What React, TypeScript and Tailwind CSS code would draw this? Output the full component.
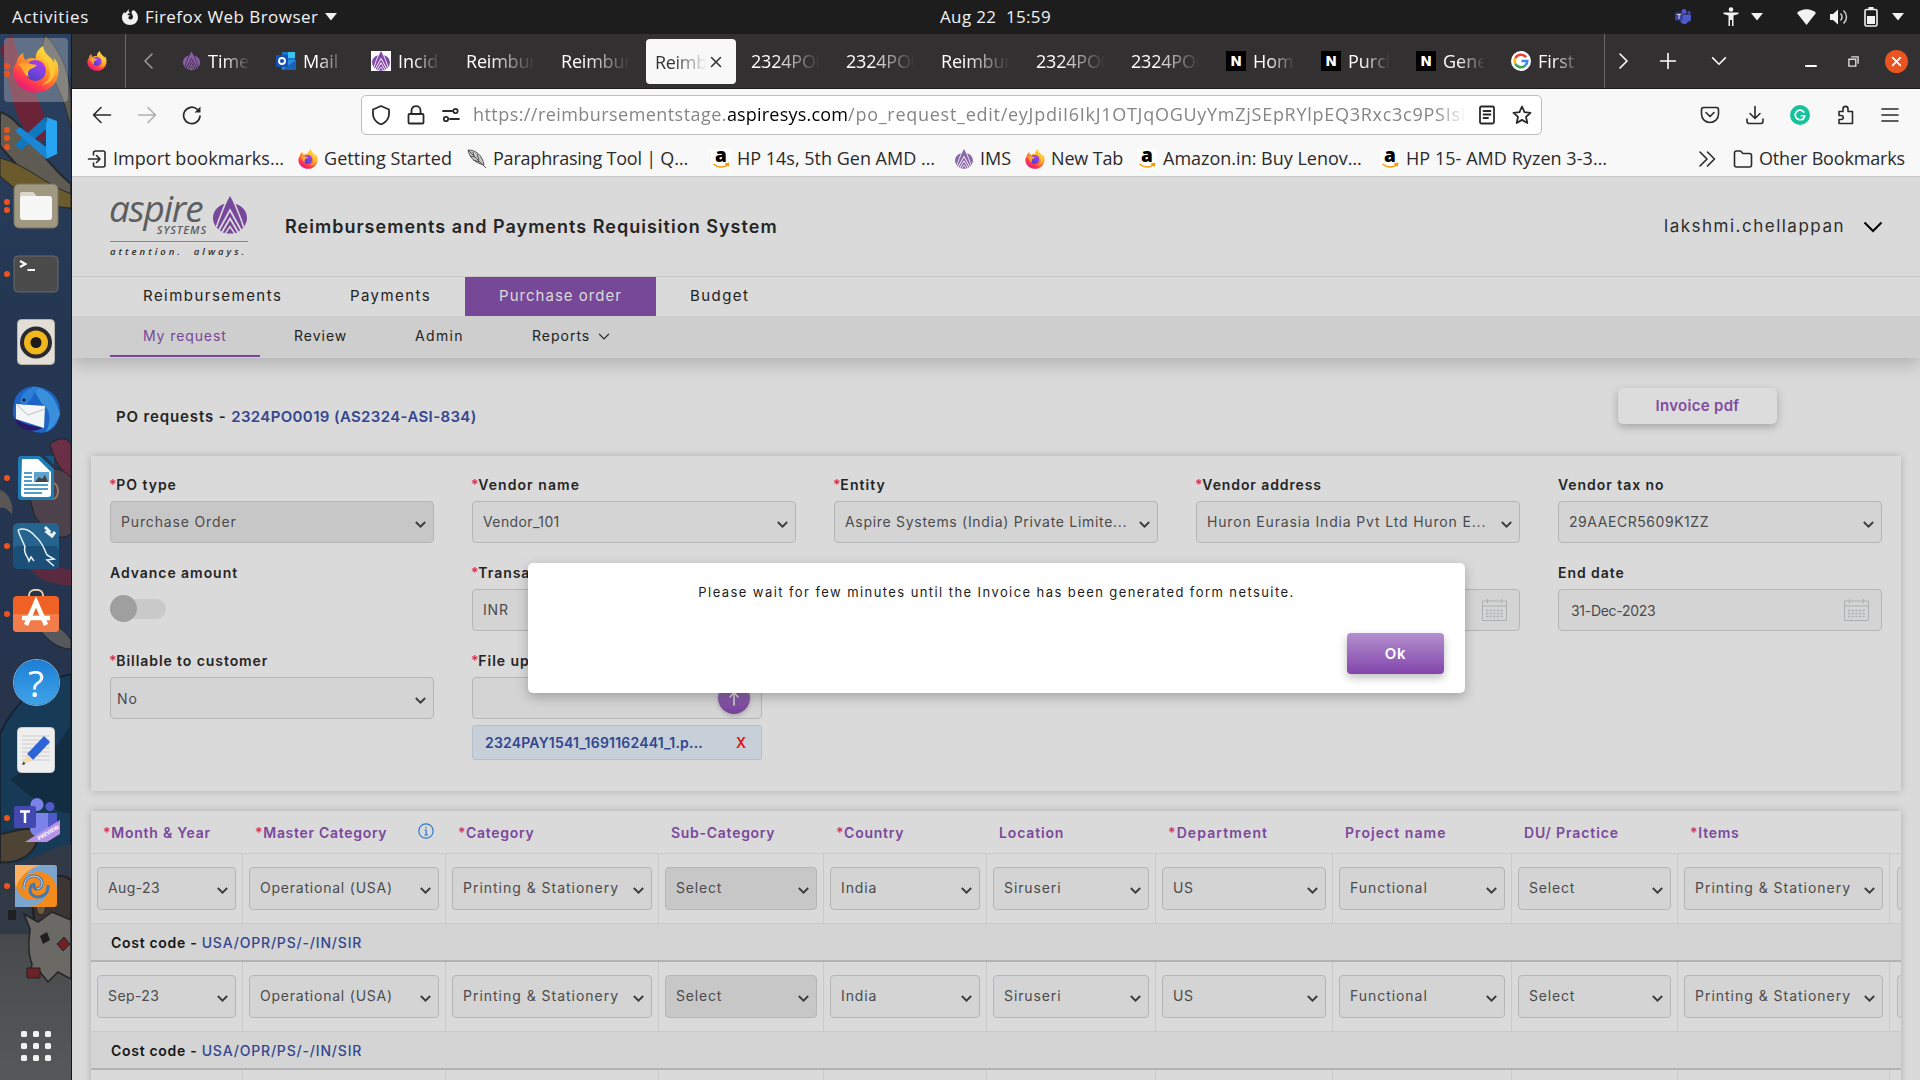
import React from "react";

const UI = "font-['Open_Sans','Noto_Sans',sans-serif]";

/* ---------- shared drawings ---------- */

function Firefox({ className = "" }: { className?: string }) {
  const id = React.useId();
  return (
    <svg viewBox="0 0 46 47" className={className}>
      <defs>
        <linearGradient id={id + "a"} x1="0.85" y1="0" x2="0.25" y2="1">
          <stop offset="0" stopColor="#fff44f" />
          <stop offset="0.3" stopColor="#ffbd2f" />
          <stop offset="0.55" stopColor="#ff7a2a" />
          <stop offset="0.78" stopColor="#ff3750" />
          <stop offset="1" stopColor="#e31587" />
        </linearGradient>
        <linearGradient id={id + "b"} x1="0.9" y1="0" x2="0.2" y2="1">
          <stop offset="0" stopColor="#c139e6" />
          <stop offset="0.5" stopColor="#7b44e0" />
          <stop offset="1" stopColor="#4a3fc4" />
        </linearGradient>
        <linearGradient id={id + "c"} x1="0" y1="0" x2="1" y2="1">
          <stop offset="0" stopColor="#ff9a2b" />
          <stop offset="1" stopColor="#ffc63a" />
        </linearGradient>
      </defs>
      <path
        fill={`url(#${id}a)`}
        d="M30 0C24 4 22 9 23 13C19 11 15 12 13 14C10 12 10 9 10.500 7C6 9 4 13 3.500 17C1 20 0 24 .5 28C2 39 12 46.500 23 46.500C36 46.500 45.500 37 45.500 24.500C45.500 19 44 15 41 12L41.500 17C39 11 31 9 30 0Z"
      />
      <circle cx="22.500" cy="24.500" r="10.500" fill={`url(#${id}b)`} />
      <path
        fill={`url(#${id}c)`}
        d="M5 18C10 15 15 17 18 18L24 19C23 21 19 22 18 23C15 24 14 28 16 31C10 29 12 24 5 18Z"
      />
      <path fill="#ffcf3e" opacity="0.75" d="M29 4C27 12 37 16 37 27C37 33 33 37 28 39C40 38 44 28 41 19C38 12 31 11 29 4Z" />
    </svg>
  );
}

function Mark({ className = "", gap = "#dadada", color = "#78469a" }: { className?: string; gap?: string; color?: string }) {
  return (
    <svg viewBox="0 0 34 38" className={className}>
      <path fill={color} d="M17 0L21 7.500C29 9 34 15 34 22C34 28 30 33 25 36C22 38 12 38 9 36C4 33 0 28 0 22C0 15 5 9 13 7.500Z" />
      <g fill="none" stroke={gap}>
        <path d="M13 5.500C10 14 6 22 3.500 31M21 5.500C24 14 28 22 30.500 31" strokeWidth="1.600" />
        <path d="M5.500 35L17 14L28.500 35" strokeWidth="1.800" />
        <path d="M8.500 37L17 22.500L25.500 37" strokeWidth="1.800" />
        <path d="M12 38L17 30.500L22 38" strokeWidth="1.500" />
      </g>
    </svg>
  );
}

function Amazon() {
  return (
    <span className="relative flex size-5 items-start justify-center bg-white">
      <b className="font-['Open_Sans'] text-[19px] leading-[13px] font-extrabold text-black">a</b>
      <svg viewBox="0 0 20 20" className="absolute inset-0 size-5" fill="none" stroke="#f90" strokeWidth="1.600">
        <path d="M2.500 15C7 19 13 19 17 15.500M14 15L17.500 14.500L17 17.500" />
      </svg>
    </span>
  );
}

function Chevron({ className = "", w = 2 }: { className?: string; w?: number }) {
  return (
    <svg viewBox="0 0 20 12" className={className} fill="none" stroke="currentColor" strokeWidth={w}>
      <path d="M1.500 1.500L10 10L18.500 1.500" />
    </svg>
  );
}

function Line({ d, className = "size-5", w = 1.6 }: { d: string; className?: string; w?: number }) {
  return (
    <svg viewBox="0 0 20 20" className={className} fill="none" stroke="currentColor" strokeWidth={w} strokeLinecap="round" strokeLinejoin="round">
      <path d={d} />
    </svg>
  );
}

function Caret() {
  return (
    <svg viewBox="0 0 12 8" className="h-2 w-3" fill="#f2f2f2">
      <path d="M0 0H12L6 7.500Z" />
    </svg>
  );
}

/* ---------- desktop top bar ---------- */

function TopBar() {
  return (
    <header className={`relative flex h-[34px] items-center bg-[#1d1d1d] text-[17px] whitespace-pre text-[#f2f2f2] ${UI}`}>
      <span className="ml-3 w-[110px] tracking-[0.7px]">Activities</span>
      <svg viewBox="0 0 16 16" className="mr-[7px] size-4" fill="#f2f2f2">
        <path d="M7 0C6 2 7 3 8.500 4.500C7 4 5.500 4.500 5.500 6C6.500 6.500 7.500 6 8 6.500C7 7.500 6 8 6.500 9.500C8 11.500 11 10.500 11 8C11 6 9.500 5 9.500 3C10 1.500 11 1.500 11.500 1C14 2.500 16 5 16 8.500C16 13 12.500 16 8 16C3.500 16 0 13 0 8.500C0 6 1 4 2.500 3L3 4.500C4 4 5 2 7 0Z" />
      </svg>
      <span className="w-[180px] tracking-[0.45px]">Firefox Web Browser</span>
      <Caret />
      <span className="ml-[603px] tracking-[0.35px]">Aug 22  15:59</span>
      <div className="ml-auto flex items-center pr-[16px]">
        <svg viewBox="0 0 16 16" className="mr-[32px] size-4">
          <circle cx="9" cy="2.500" r="2.500" fill="#5059c9" />
          <circle cx="14" cy="3.500" r="1.700" fill="#4349a8" />
          <path d="M6 5.500H16V10C16 12 14.500 13 13 12.500C12 16 6 16 5.500 12Z" fill="#5059c9" />
          <rect y="3.500" width="8" height="8" rx="1" fill="#3940a0" />
          <path d="M2 5.500H6M4 5.500V10" stroke="#ddd" />
        </svg>
        <svg viewBox="0 0 16 20" className="mr-[12px] h-5 w-4" fill="#f2f2f2">
          <circle cx="8" cy="2.500" r="2.300" />
          <path d="M.5 5.500H15.500V7L10.500 8.500V19H9V13H7V19H5.500V8.500L.5 7Z" />
        </svg>
        <Caret />
        <svg viewBox="0 0 19 16" className="ml-[34px] h-4 w-[19px]" fill="#f2f2f2">
          <path d="M9.500 16L0 4C5 -1 14 -1 19 4Z" />
        </svg>
        <svg viewBox="0 0 20 18" className="ml-[13px] h-[18px] w-5" fill="#f2f2f2">
          <path d="M1 6H4L9 1.500V16.500L4 12H1Z" />
          <path d="M11.500 5.500C13.500 7.500 13.500 10.500 11.500 12.500M14.500 2.500C18.500 6.500 18.500 11.500 14.500 15.500" fill="none" stroke="#cfcfcf" strokeWidth="1.500" />
        </svg>
        <svg viewBox="0 0 14 20" className="mr-[14px] ml-[15px] h-5 w-[14px]" fill="#f2f2f2">
          <path d="M4.500 0H9.500V2H4.500Z" />
          <rect x="1" y="2.500" width="12" height="16.500" rx="1.500" fill="none" stroke="#f2f2f2" strokeWidth="1.600" />
          <rect x="3" y="9" width="8" height="8" />
        </svg>
        <Caret />
      </div>
    </header>
  );
}

/* ---------- dock ---------- */

function Wallpaper() {
  return (
    <svg viewBox="0 0 71 1046" className="absolute inset-0 h-full w-full" preserveAspectRatio="none">
      <defs>
        <linearGradient id="wall" x1="0" y1="0" x2="0" y2="1">
          <stop offset="0" stopColor="#2c4160" />
          <stop offset="0.25" stopColor="#243753" />
          <stop offset="0.6" stopColor="#26344e" />
          <stop offset="0.8" stopColor="#2f3440" />
          <stop offset="0.87" stopColor="#494a4c" />
          <stop offset="1" stopColor="#56585b" />
        </linearGradient>
      </defs>
      <rect width="71" height="1046" fill="url(#wall)" />
      <path d="M0 14L12 0C22 40 45 70 50 105C35 112 20 95 14 70Z" fill="#6b2437" />
      <path d="M45 0C62 20 71 40 71 70V95C62 55 50 35 38 30Z" fill="#5b5a55" stroke="#2a2a2c" />
      <path d="M0 78C22 84 35 120 71 150V175C40 160 25 140 0 112Z" fill="#5e5b52" stroke="#26282c" strokeWidth="2" />
      <path d="M0 124C25 130 45 150 71 160V174C40 172 20 160 0 142Z" fill="#6b5a2c" stroke="#26282c" />
      <path d="M50 410C60 402 70 404 71 412V445C62 436 55 430 50 410Z" fill="#6a2f45" stroke="#222" />
      <path d="M0 456C8 458 14 470 12 480C8 476 4 472 0 474Z" fill="#5a5654" />
      <path d="M26 450C34 434 60 428 71 444V500C60 508 45 500 34 480Z" fill="#4d414b" stroke="#222" />
      <ellipse cx="53" cy="457" rx="5" ry="8" fill="none" stroke="#8a7c60" strokeWidth="2" />
      <path d="M28 532C40 525 60 534 71 536V552C50 550 36 545 28 532Z" fill="#5a2a40" />
      <path d="M36 590C50 586 65 595 71 606V615C58 615 45 605 36 590Z" fill="#55585c" stroke="#222" />
      <path d="M0 700C15 665 45 645 71 640V840H0Z" fill="#173b56" stroke="#142335" strokeWidth="2" />
      <path d="M10 745C35 730 55 720 71 690V780C50 775 30 765 10 745Z" fill="#122c42" />
      <path d="M0 800C14 798 32 790 38 800C38 820 18 830 0 828Z" fill="#4d4436" stroke="#23252a" strokeWidth="2" />
      <path d="M0 830C30 832 40 815 71 810V900H0Z" fill="#313846" />
      <path d="M32 868C42 840 62 838 71 846V900H36Z" fill="#3b3533" stroke="#1e1e20" strokeWidth="2" />
      <ellipse cx="41" cy="872" rx="5" ry="9" fill="#6b5a3c" stroke="#1e1e20" />
      <path d="M24 880L38 888L52 878L71 886V945L58 938L48 948L40 938L30 942L32 930C26 915 30 900 30 895Z" fill="#6b6965" stroke="#232325" strokeWidth="1.500" />
      <path d="M40 902L47 898L50 906L43 910Z" fill="#1f1f22" />
      <path d="M57 910L64 903L70 910L63 917Z" fill="#6d2326" stroke="#222" />
      <path d="M27 934H40V944H27Z" fill="#6d2326" stroke="#222" />
      <path d="M8 876H16V886H8Z" fill="#1f2022" />
    </svg>
  );
}

function DockSlot({ dots, children }: { dots: number; children?: React.ReactNode }) {
  return (
    <div className="flex h-[68px] shrink-0 items-center">
      <div className="ml-[3px] flex w-[8px] flex-col items-center gap-[2.5px]">
        {Array.from({ length: dots }, (_, i) => (
          <i key={i} className="size-[6px] rounded-full bg-[#e95420]" />
        ))}
      </div>
      <div className="flex w-[50px] items-center justify-center">{children}</div>
    </div>
  );
}

function Dock() {
  return (
    <aside className="relative h-full w-[72px] shrink-0 overflow-hidden border-r border-[#15171a] bg-[#26364f]">
      <Wallpaper />
      <div className="absolute top-[4px] left-[4px] h-[64px] w-[64px] rounded-[4px] bg-white/25" />
      <div className="relative flex h-full flex-col pt-[2px]">
        <DockSlot dots={2}><Firefox className="mb-[2px] h-[47px] w-[46px]" /></DockSlot>
        <DockSlot dots={3}>
          <svg viewBox="0 0 42 42" className="size-[42px]">
            <path d="M0 28L30 0L34 10L6 33Z" fill="#0f78c0" />
            <path d="M0 14L5 10L36 34L31 42Z" fill="#1a86d4" />
            <path d="M31 0L42 4V37L31 42C33 40 31 34 31 34V8C31 8 33 2 31 0Z" fill="#27a5f2" />
          </svg>
        </DockSlot>
        <DockSlot dots={2}>
          <svg viewBox="0 0 46 46" className="size-[46px]">
            <rect x="1" y="1" width="44" height="44" rx="5" fill="#a09881" stroke="#77705d" />
            <path d="M7 11C7 9.500 8 9 9 9H20L23 12V20H7Z" fill="#dcd7cb" />
            <rect x="7" y="13" width="32" height="24" rx="3" fill="#f7f7f6" />
          </svg>
        </DockSlot>
        <DockSlot dots={1}>
          <svg viewBox="0 0 46 38" className="h-[38px] w-[46px]" fill="none" stroke="#fff" strokeWidth="2">
            <rect x="1" y="1" width="44" height="36" rx="4" fill="#4b4b4b" stroke="#6a6a6a" strokeWidth="1" />
            <path d="M7 6L12.500 9L7 12M14.500 15H22" />
          </svg>
        </DockSlot>
        <DockSlot dots={0}>
          <svg viewBox="0 0 38 46" className="h-[46px] w-[38px]">
            <rect x=".5" y=".5" width="37" height="45" rx="4" fill="#e3dfd6" stroke="#b8b3a8" />
            <circle cx="19" cy="23.500" r="16" fill="#2a2a30" />
            <circle cx="19" cy="23.500" r="12" fill="#f0b81c" />
            <circle cx="19" cy="23.500" r="5.500" fill="#1c1c1e" />
          </svg>
        </DockSlot>
        <DockSlot dots={0}>
          <svg viewBox="0 0 48 48" className="size-12">
            <path d="M2 16C5 5 15 -1 26 1C40 3 48 13 48 25C48 38 40 46 30 47C16 46 0 38 1 24Z" fill="#1d64c4" />
            <path d="M20 1C30 0 42 8 46 22L48 28C44 40 38 44 34 46C40 34 38 22 30 18Z" fill="#3a8fdc" />
            <path d="M4 18L33 20L32 42L4 33Z" fill="#f4f5f7" />
            <path d="M5 19L16 29L33 23" fill="none" stroke="#b9bcc4" />
            <path d="M8 16C10 4 20 0 28 2C20 6 22 14 12 19Z" fill="#2b7fd6" />
            <path d="M3 33L14 38L30 42C20 48 6 44 3 33Z" fill="#2a1768" />
            <circle cx="12" cy="14" r="1.500" fill="#111" />
          </svg>
        </DockSlot>
        <DockSlot dots={1}>
          <svg viewBox="0 0 38 46" className="h-[46px] w-[38px]">
            <path d="M4 1H23L37 14V41C37 44 36 45 33 45H5C2 45 1 44 1 41V5C1 2 2 1 4 1Z" fill="#1f7db4" />
            <path d="M5 4H21L34 17V39C34 41 33 42 31 42H7C5 42 4 41 4 39Z" fill="#fff" />
            <path d="M28 1H37V10Z" fill="#155a87" />
            <path d="M7 18H15M7 22H15M7 26H15M7 30H31M7 34H31M7 38H25" stroke="#1f7db4" strokeWidth="1.600" />
            <rect x="17" y="17" width="15" height="10" fill="#5ba5d0" />
            <path d="M18 27L22 22L25 24L28 20L31 27Z" fill="#444" />
          </svg>
        </DockSlot>
        <DockSlot dots={1}>
          <svg viewBox="0 0 46 46" className="size-[46px]">
            <rect width="46" height="46" rx="5" fill="#25648f" />
            <rect y="23" width="46" height="23" rx="5" fill="#1c4f78" />
            <path d="M5 7C12 4 18 8 23 14C30 20 31 26 34 32L41 36L34 37L41 43M5 7C7 14 10 18 12 24C10 30 14 32 16 38L18 34L21 38" fill="none" stroke="#e9f1f7" strokeWidth="1.500" />
            <path d="M32 4L36 8L34 9L39 13L42 9" fill="none" stroke="#e9f1f7" strokeWidth="3" />
          </svg>
        </DockSlot>
        <DockSlot dots={1}>
          <svg viewBox="0 0 46 44" className="mb-[6px] h-[44px] w-[46px]">
            <path d="M16 9V6C16 -1 30 -1 30 6V9" fill="none" stroke="#f0d9b0" strokeWidth="1.800" />
            <rect y="7" width="46" height="36" rx="4" fill="#ef6125" />
            <path d="M0 25H46V39C46 42 44 43 42 43H4C2 43 0 42 0 39Z" fill="#f37d4a" />
            <path d="M13 36L23 13L33 36M9 29H37" fill="none" stroke="#fff" strokeWidth="4.500" />
          </svg>
        </DockSlot>
        <DockSlot dots={0}>
          <span className={`flex size-[45px] items-center justify-center rounded-full bg-linear-to-b from-[#1c7fd6] to-[#3fa3e8] pt-[1px] text-[37px] leading-none text-white ring-1 ring-[#72b7ea] ${UI}`}>?</span>
        </DockSlot>
        <DockSlot dots={0}>
          <svg viewBox="0 0 38 46" className="h-[46px] w-[38px]">
            <rect x=".5" y=".5" width="37" height="45" rx="4" fill="#efefef" stroke="#cfcfcf" />
            <path d="M5 9H33M5 13H33M5 17H33M5 21H33M5 25H33M5 29H33M5 33H33" stroke="#c9c9c9" />
            <path d="M27 9L33 15L16 33L10 27Z" fill="#2c63d6" />
            <path d="M10 27L16 33L5 38Z" fill="#f5d9b3" />
            <path d="M5 38L6.500 34.500L8.500 37Z" fill="#333" />
          </svg>
        </DockSlot>
        <DockSlot dots={1}>
          <svg viewBox="0 0 46 44" className="mt-[4px] ml-[2px] h-[44px] w-[46px]">
            <circle cx="23" cy="6.500" r="6.500" fill="#7b83eb" />
            <circle cx="36" cy="8.500" r="4.500" fill="#5059c9" />
            <path d="M16 15H43V29C43 34 38 36 34 33C30 42 16 40 16 30Z" fill="#7b83eb" />
            <path d="M34 15H43V28C43 33 38 35 34 33Z" fill="#5059c9" />
            <rect y="8" width="22" height="22" rx="2" fill="#4349ae" />
            <path d="M6 13.500H16M11 13.500V25" stroke="#fff" strokeWidth="2.500" />
            <path d="M11 44L46 22V36L33 44Z" fill="#b592e6" />
            <text x="25" y="42.500" transform="rotate(-31 25 42.500)" fontSize="5.500" fontWeight="700" fill="#fff" fontFamily="Open Sans">PREVIEW</text>
          </svg>
        </DockSlot>
        <DockSlot dots={1}>
          <svg viewBox="0 0 42 42" className="size-[42px]">
            <rect width="42" height="42" rx="3" fill="#f28a1c" />
            <path d="M0 0H28C14 2 3 12 0 26Z" fill="#f9b264" />
            <path d="M42 3V24C40 12 32 6 22 7C14 8 10 12 9 18C10 8 18 0 30 0H39C41 0 42 1 42 3Z" fill="#7ba4cf" />
            <path d="M0 42V18C2 30 10 36 20 35C28 34 32 30 33 24C32 34 24 42 12 42Z" fill="#7ba4cf" />
            <path d="M9 24C8 14 16 9 23 12C29 15 28 23 22 24C19 24 18 21 20 19M33 20C34 30 25 34 19 31C13 28 14 20 20 19" fill="none" stroke="#3f78b5" strokeWidth="3" />
            <path d="M9 24C8 14 16 9 23 12C29 15 28 23 22 24" fill="none" stroke="#cfe0f2" strokeWidth="1" />
          </svg>
        </DockSlot>
        <div className="mt-[111px] ml-[21px] grid w-[30px] grid-cols-3 gap-[6px]">
          {Array.from({ length: 9 }, (_, i) => (
            <i key={i} className="size-[6px] rounded-[1.5px] bg-[#f2f2f2]" />
          ))}
        </div>
      </div>
    </aside>
  );
}

/* ---------- browser chrome ---------- */

function N() {
  return <span className="flex size-5 items-center justify-center bg-black font-['DejaVu_Sans'] text-[14px] font-bold text-white">N</span>;
}

function Outlook() {
  return (
    <svg viewBox="0 0 20 20" className="size-5">
      <rect x="6" y="1" width="13" height="12" fill="#1a73c9" />
      <path d="M12 1H19V7H12Z" fill="#3cc3f2" />
      <path d="M5 9L20 9V19H6Z" fill="#2a8ee0" />
      <path d="M6 19L20 9V19Z" fill="#1b62b8" />
      <rect y="4" width="12" height="12" rx="1" fill="#1450b4" />
      <circle cx="6" cy="10" r="3" fill="none" stroke="#fff" strokeWidth="1.800" />
    </svg>
  );
}

function Google() {
  return (
    <span className="flex size-5 items-center justify-center rounded-full bg-white">
      <svg viewBox="0 0 16 16" className="size-4" fill="none" strokeWidth="2.600">
        <path d="M13 4.200A6.300 6.300 0 0 0 2.300 5.300" stroke="#ea4335" />
        <path d="M2.300 5.300A6.300 6.300 0 0 0 2.300 10.700" stroke="#fbbc05" />
        <path d="M2.300 10.700A6.300 6.300 0 0 0 12 12.800" stroke="#34a853" />
        <path d="M12 12.800C13.500 11.500 14.300 10 14.300 8H8.500" stroke="#4285f4" />
      </svg>
    </span>
  );
}

const fade = "[mask-image:linear-gradient(to_right,black_35%,transparent_100%)]";

type Tab = { label: string; icon?: React.ReactNode; active?: boolean };

const tabs: Tab[] = [
  { label: "Time", icon: <span className="flex w-5 justify-center"><Mark className="h-[20px] w-[17px]" gap="#323031" color="#8a5cab" /></span> },
  { label: "Mail -", icon: <Outlook /> },
  { label: "Incid", icon: <span className="flex size-5 items-center justify-center bg-white"><Mark className="h-[20px] w-[18px]" gap="#fff" color="#8449a8" /></span> },
  { label: "Reimbur" },
  { label: "Reimbur" },
  { label: "Reimb", active: true },
  { label: "2324PO0" },
  { label: "2324PO0" },
  { label: "Reimbur" },
  { label: "2324PO0" },
  { label: "2324PO0" },
  { label: "Hom", icon: <N /> },
  { label: "Purch", icon: <N /> },
  { label: "Gene", icon: <N /> },
  { label: "First", icon: <Google /> },
];

function TabStrip() {
  return (
    <div className="flex h-[55px] shrink-0 border-b border-[#1c1b1c] bg-[#323031] text-white">
      <div className="flex w-[54px] items-center justify-center border-r border-[#6a6869]">
        <Firefox className="mr-[3px] size-5" />
      </div>
      <div className="flex w-[40px] items-center justify-center pl-[5px] text-[#9b999a]">
        <Line d="M13 3L6 10L13 17" />
      </div>
      <div className="flex w-[1438px]">
        {tabs.map((t, i) =>
          t.active ? (
            <div key={i} className="w-[95px] px-[5px] py-[5px]">
              <div className="flex h-[45px] w-[90px] items-center rounded-[4px] bg-[#f8f8f8] pl-[9px] text-[#333]">
                <span className={`w-[52px] overflow-hidden pt-[1px] text-[18px] tracking-[-0.3px] ${fade}`}>{t.label}</span>
                <Line d="M5 5L15 15M15 5L5 15" className="size-[18px]" w={1.7} />
              </div>
            </div>
          ) : (
            <div key={i} className="flex w-[95px] items-center pl-[15px]">
              {t.icon && <span className="mr-[7px] flex">{t.icon}</span>}
              <span className={`overflow-hidden pt-[1px] text-[18px] whitespace-nowrap ${t.icon ? "w-[42px]" : "w-[69px] tracking-[-0.2px]"} ${fade}`}>{t.label}</span>
            </div>
          ),
        )}
      </div>
      <div className="flex flex-1 items-center border-l border-[#6a6869]">
        <Line d="M7 3L14 10L7 17" className="ml-[8px] size-5" />
        <Line d="M10 2.500V17.500M2.500 10H17.500" className="ml-[25px] size-5" />
        <Chevron className="ml-[33px] h-[10px] w-4" />
        <Line d="M5 15H15" className="ml-[74px] size-5" w={2} />
        <svg viewBox="0 0 12 12" className="ml-[27px] size-[11px]" fill="none" stroke="#e0e0e0" strokeWidth="1.500">
          <path d="M1 3.500H8.500V11H1ZM3.500 1H11V8.500" />
        </svg>
        <span className="ml-[26px] flex size-[23px] items-center justify-center rounded-full bg-[#e95420]">
          <Line d="M5.500 5.500L14.500 14.500M14.500 5.500L5.500 14.500" className="size-[17px]" w={2} />
        </span>
      </div>
    </div>
  );
}

function Toolbar() {
  return (
    <div className="flex h-[51px] shrink-0 items-center bg-[#f8f8f8] text-[#2b2a2b]">
      <Line d="M18.500 10H1.500M9 2.500L1.500 10L9 17.500" className="ml-[20px] size-5" />
      <Line d="M1.500 10H18.500M11 2.500L18.500 10L11 17.500" className="ml-[25px] size-5 text-[#b0b0b0]" />
      <svg viewBox="0 0 20 20" className="ml-[25px] size-5" fill="none" stroke="currentColor" strokeWidth="1.700" strokeLinecap="round">
        <path d="M18 11A8.200 8.200 0 1 1 15.500 4.500" />
        <path d="M18.500 1.500V7.500H12.500Z" fill="currentColor" stroke="none" />
      </svg>
      <div className="ml-[159px] flex h-[40px] w-[1181px] items-center rounded-[5px] border border-[#bdbdbd] bg-white">
        <Line d="M10 1L18 4.500V9C18 14 14.500 17.500 10 19.500C5.500 17.500 2 14 2 9V4.500Z" className="ml-[9px] size-5" w={1.8} />
        <Line d="M3.500 9H16.500C17 9 17.500 9.500 17.500 10V17.500C17.500 18 17 18.500 16.500 18.500H3.500C3 18.500 2.500 18 2.500 17.500V10C2.500 9.500 3 9 3.500 9ZM5.500 9V5.500C5.500 -.3 14.500 -.3 14.500 5.500V9" className="ml-[15px] size-5" w={1.8} />
        <Line d="M2 6H11M18 14H9M14.500 3.800A2.200 2.200 0 1 1 14.500 8.200A2.200 2.200 0 1 1 14.500 3.800M5 11.800A2.200 2.200 0 1 1 5 16.200A2.200 2.200 0 1 1 5 11.800" className="ml-[15px] size-5" w={1.8} />
        <div className="ml-[12px] w-[993px] overflow-hidden text-[18px] whitespace-nowrap text-[#858585] [mask-image:linear-gradient(to_right,black_97%,transparent_100%)]">
          <span className="tracking-[0.44px]">https://reimbursementstage.</span>
          <span className="tracking-[0.2px] text-black">aspiresys.com</span>
          <span className="tracking-[0.73px]">/po_request_edit/eyJpdiI6IkJ1OTJqOGUyYmZjSEpRYlpEQ3Rxc3c9PSIsI</span>
        </div>
        <Line d="M4.500 1.500H15.500C16.500 1.500 17 2 17 3V17C17 18 16.500 18.500 15.500 18.500H4.500C3.500 18.500 3 18 3 17V3C3 2 3.500 1.500 4.500 1.500ZM6.500 6H13.500M6.500 9.500H13.500M6.500 13H11" className="ml-[11px] size-5" w={1.8} />
        <Line d="M10 1.500L12.500 7.200L18.500 7.800L14 11.900L15.300 18L10 14.900L4.700 18L6 11.900L1.500 7.800L7.500 7.200Z" className="ml-[15px] size-5" w={1.8} />
      </div>
      <Line d="M3.500 2.500H16.500C18 2.500 18.500 3.500 18.500 5V9C18.500 14 14.500 17.500 10 17.500C5.500 17.500 1.500 14 1.500 9V5C1.500 3.500 2 2.500 3.500 2.500ZM6 7.500L10 11.500L14 7.500" className="ml-[158px] size-5" />
      <Line d="M10 1.500V13M5 8.500L10 13.500L15 8.500M2 14V16C2 17.500 2.500 18.500 4 18.500H16C17.500 18.500 18 17.500 18 16V14" className="ml-[25px] size-5" />
      <span className="ml-[25px] flex size-5 items-center justify-center rounded-full bg-[#15c39a] text-white">
        <Line d="M15 6.500A6 6 0 1 0 16 11H11.500M16 11L14 15.500" className="size-[16px]" w={2} />
      </span>
      <Line d="M4 6.500H8V4C8 .5 13 .5 13 4V6.500H17.500V18.500H4V14.500H6C9 14.500 9 10.500 6 10.500H4Z" className="ml-[25px] size-5" />
      <Line d="M2 4H18M2 10H18M2 16H18" className="ml-[25px] size-5" />
    </div>
  );
}

function Bookmark({ w, icon, track = "", children }: { w: string; icon: React.ReactNode; track?: string; children: React.ReactNode }) {
  return (
    <div className={`flex items-center ${w}`}>
      <span className="mr-[6px] flex w-5 justify-center">{icon}</span>
      <span className={`whitespace-nowrap ${track}`}>{children}</span>
    </div>
  );
}

function Bookmarks() {
  return (
    <div className="flex h-[37px] shrink-0 items-center border-b border-[#c6c6c6] bg-[#f8f8f8] pt-[1px] pl-[15px] text-[18px] text-[#2b2a2b]">
      <Bookmark w="w-[211px]" track="tracking-[0.05px]" icon={<Line d="M6.500 6V4C6.500 2.500 7 2 8.500 2H16C17.500 2 18 2.500 18 4V16C18 17.500 17.500 18 16 18H8.500C7 18 6.500 17.500 6.500 16V14M1.500 10H12.500M9.500 6.500L13 10L9.500 13.500" />}>Import bookmarks…</Bookmark>
      <Bookmark w="w-[169px]" track="tracking-[0.05px]" icon={<Firefox className="size-5" />}>Getting Started</Bookmark>
      <Bookmark
        w="w-[244px]"
        track="tracking-[-0.21px]"
        icon={
          <svg viewBox="0 0 20 20" className="size-5" fill="#c9c9c9" stroke="#555" strokeWidth="1">
            <path d="M1 1C8 1 15 5 17 16C9 14 3 10 1 1ZM1 1L19 19M6 3L7 7M10 5L12 11M3 7L8 8M6 11L13 13" />
          </svg>
        }
      >
        Paraphrasing Tool | Q…
      </Bookmark>
      <Bookmark w="w-[243px]" icon={<Amazon />}>HP 14s, 5th Gen AMD …</Bookmark>
      <Bookmark w="w-[71px]" icon={<Mark className="h-[20px] w-[18px]" gap="#f8f8f8" color="#8a68a8" />}>IMS</Bookmark>
      <Bookmark w="w-[112px]" track="tracking-[-0.15px]" icon={<Firefox className="size-5" />}>New Tab</Bookmark>
      <Bookmark w="w-[243px]" icon={<Amazon />}>Amazon.in: Buy Lenov…</Bookmark>
      <Bookmark w="w-[319px]" track="tracking-[0.05px]" icon={<Amazon />}>HP 15- AMD Ryzen 3-3…</Bookmark>
      <Line d="M3 3L10 10L3 17M10.500 3L17.500 10L10.500 17" className="mr-[16px] ml-[-2px] size-5" />
      <Bookmark w="w-[170px]" track="tracking-[-0.16px]" icon={<Line d="M1.500 16V4C1.500 2.500 2.200 2 3.500 2H7.500L10 4.500H16.500C18 4.500 18.500 5 18.500 6.500V16C18.500 17.500 18 18 16.500 18H3.500C2.200 18 1.500 17.500 1.500 16Z" />}>Other Bookmarks</Bookmark>
    </div>
  );
}

/* ---------- web page ---------- */

function SiteHeader() {
  return (
    <div className="shrink-0 shadow-[0_6px_18px_rgba(0,0,0,0.2)]">
      <div className="flex h-[100px] items-center border-b border-[#c8c8c8] pl-[38px]">
        <div className="h-[62px] w-[138px] font-['Open_Sans'] italic">
          <div className="flex h-[46px] items-start border-b border-[#9a72b4]">
            <div className="w-[103px] text-[#5d5e60]">
              <div className="mt-[-7px] ml-[-1px] text-[37px] leading-[38px] font-medium tracking-[-1.2px]">aspire</div>
              <div className="mt-[-3px] mr-[6px] text-right text-[11px] leading-[12px] font-semibold tracking-[0.9px]">SYSTEMS</div>
            </div>
            <Mark className="h-[38px] w-[34px]" />
          </div>
          <div className="text-[9.5px] leading-[19px] font-semibold tracking-[3px] whitespace-pre text-[#2c2c2c]">attention.  always.</div>
        </div>
        <h1 className="ml-[37px] pb-[1px] text-[18px] font-semibold tracking-[1.02px] text-[#252525]">Reimbursements and Payments Requisition System</h1>
        <span className="mr-[18px] ml-auto text-[17px] tracking-[1.5px] text-[#2c2c2c]">lakshmi.chellappan</span>
        <Chevron className="mr-[37px] h-[12px] w-[20px] text-black" />
      </div>
      <nav className="flex h-[39px] items-center bg-[#dadada] pl-[71px] text-[15px] text-[#222]">
        <span className="w-[207px] tracking-[1.47px]">Reimbursements</span>
        <span className="w-[115px] tracking-[1.42px]">Payments</span>
        <span className="flex h-full w-[191px] items-center justify-center bg-[#784898] tracking-[1.02px] text-[#dadada]">Purchase order</span>
        <span className="ml-[34px] tracking-[1.42px]">Budget</span>
      </nav>
      <nav className="flex h-[42px] bg-[#cecece] pl-[38px] text-[14px] leading-[40px] text-[#222]">
        <span className="h-[41px] w-[150px] border-b-2 border-[#78469a] pl-[33px] tracking-[0.9px] text-[#78469a]">My request</span>
        <span className="ml-[34px] w-[121px] tracking-[1px]">Review</span>
        <span className="w-[117px] tracking-[1.35px]">Admin</span>
        <span className="w-[66px] tracking-[1px]">Reports</span>
        <Chevron className="mt-[17px] h-[7px] w-[12px]" w={2.2} />
      </nav>
    </div>
  );
}

function Star({ className = "" }: { className?: string }) {
  return <span className={`text-[#d0355c] ${className}`}>*</span>;
}

function Select({ value, track = "tracking-[0.85px]", disabled = false, h = "h-[42px]", arrow = true, pl = "pl-[10px]", low = false }: { value: string; track?: string; disabled?: boolean; h?: string; arrow?: boolean; pl?: string; low?: boolean }) {
  return (
    <div className={`flex ${h} w-full items-center rounded-[4px] border border-[#b4b5b7] text-[14px] text-[#4b4b4d] ${disabled ? "bg-[#c7c7c7]" : "bg-[#d4d4d4]"} ${pl} pr-[7px]`}>
      <span className={`whitespace-nowrap ${low ? "" : "pb-[2px]"} ${track}`}>{value}</span>
      {arrow && <Chevron className="mt-[4px] ml-auto h-[7px] w-[11px] shrink-0 text-[#3c3c3e]" w={3.4} />}
    </div>
  );
}

function DateBox({ value }: { value: string }) {
  return (
    <div className="flex h-[42px] items-center justify-between rounded-[4px] border border-[#b4b5b7] bg-[#d4d4d4] pr-[12px] pl-[12px] text-[14px] tracking-[-0.3px] text-[#4b4b4d]">
      <span>{value}</span>
      <svg viewBox="0 0 25 22" className="h-[22px] w-[25px]" fill="none" stroke="#aab0b2">
        <path d="M.5 2H24.500V21.500H.5ZM.5 7H24.500M5.500 0V4.500M19.500 0V4.500" />
        <path d="M4 11.500H21M4 14.500H21M4 17.500H21" strokeWidth="1.500" strokeDasharray="2.200 1.400" />
      </svg>
    </div>
  );
}

function Field({ label, req = false, track = "tracking-[0.95px]", children }: { label: string; req?: boolean; track?: string; children?: React.ReactNode }) {
  return (
    <div className="w-[324px]">
      <div className={`mb-[6px] h-5 text-[14px] leading-5 font-semibold whitespace-nowrap text-[#252525] ${track}`}>
        {req && <Star className="ml-[-1px] tracking-[-0.2px]" />}
        {label}
      </div>
      {children}
    </div>
  );
}

function RequestForm() {
  return (
    <section className="ml-[19px] h-[335px] w-[1810px] shrink-0 bg-[#dadada] pt-[19px] pl-[19px] shadow-[0_0_8px_rgba(0,0,0,0.2)]">
      <div className="grid grid-cols-[repeat(5,324px)] gap-x-[38px] gap-y-[20px]">
        <Field label="PO type" req><Select value="Purchase Order" disabled /></Field>
        <Field label="Vendor name" req track="tracking-[1.05px]"><Select value="Vendor_101" track="tracking-[0.4px]" /></Field>
        <Field label="Entity" req track="tracking-[1.05px]"><Select value="Aspire Systems (India) Private Limite..." track="tracking-[0.7px]" /></Field>
        <Field label="Vendor address" req track="tracking-[0.9px]"><Select value="Huron Eurasia India Pvt Ltd Huron E..." track="tracking-[0.84px]" /></Field>
        <Field label="Vendor tax no"><Select value="29AAECR5609K1ZZ" track="tracking-[0.55px]" /></Field>

        <Field label="Advance amount">
          <div className="flex h-[42px] items-start pt-[6px]">
            <div className="mt-[4px] h-[20px] w-[56px] rounded-full bg-[#c9c9c9]">
              <div className="mt-[-4px] size-[27px] rounded-full bg-[#9f9f9f]" />
            </div>
          </div>
        </Field>
        <Field label="Transa" req><Select value="INR" arrow={false} /></Field>
        <div />
        <div className="pt-[26px]"><DateBox value="" /></div>
        <Field label="End date"><DateBox value="31-Dec-2023" /></Field>

        <Field label="Billable to customer" req track="tracking-[0.92px]"><Select value="No" pl="pl-[6px]" low /></Field>
        <Field label="File up" req>
          <div className="flex h-[42px] w-[290px] items-center justify-end rounded-[4px] border border-[#b4b5b7] bg-[#d4d4d4] pr-[11px]">
            <span className="flex size-[32px] items-center justify-center rounded-full bg-linear-to-b from-[#9a77b2] to-[#743f99] text-[#dadada] shadow-[0_2px_4px_rgba(0,0,0,0.2)]">
              <Line d="M10 17V5M6 9L10 4.500L14 9" className="size-5" w={1.5} />
            </span>
          </div>
          <div className="mt-[6px] flex h-[35px] w-[290px] items-center justify-between rounded-[3px] border border-[#b3c0cb] bg-[#c7d0d9] pr-[15px] pl-[12px] text-[14px] font-semibold text-[#33468f]">
            <span className="tracking-[0.2px]">2324PAY1541_1691162441_1.p...</span>
            <span className="text-[#dd1515]">X</span>
          </div>
        </Field>
      </div>
    </section>
  );
}

type Col = { w: string; head: string; req?: boolean; info?: boolean; value: string; disabled?: boolean; ht: string; vt: string };

const columns: Col[] = [
  { w: "w-[152px]", head: "Month & Year", req: true, value: "", ht: "tracking-[0.75px]", vt: "tracking-[0.4px]" },
  { w: "w-[203px]", head: "Master Category", req: true, info: true, value: "Operational (USA)", ht: "tracking-[0.7px]", vt: "tracking-[0.78px]" },
  { w: "w-[213px]", head: "Category", req: true, value: "Printing & Stationery", ht: "tracking-[0.7px]", vt: "tracking-[0.98px]" },
  { w: "w-[165px]", head: "Sub-Category", value: "Select", disabled: true, ht: "tracking-[0.72px]", vt: "tracking-[0.8px]" },
  { w: "w-[163px]", head: "Country", req: true, value: "India", ht: "tracking-[0.75px]", vt: "tracking-[0.9px]" },
  { w: "w-[169px]", head: "Location", value: "Siruseri", ht: "tracking-[0.85px]", vt: "tracking-[0.9px]" },
  { w: "w-[177px]", head: "Department", req: true, value: "US", ht: "tracking-[1.1px]", vt: "tracking-[0.6px]" },
  { w: "w-[179px]", head: "Project name", value: "Functional", ht: "tracking-[1.05px]", vt: "tracking-[0.95px]" },
  { w: "w-[166px]", head: "DU/ Practice", value: "Select", ht: "tracking-[0.9px]", vt: "tracking-[0.8px]" },
  { w: "w-[212px]", head: "Items", req: true, value: "Printing & Stationery", ht: "tracking-[0.75px]", vt: "tracking-[0.98px]" },
];

function LineItem({ month }: { month: string }) {
  return (
    <>
      <div className="flex h-[70px] shrink-0 border-b border-[#c9c9c9]">
        {columns.map((c, i) => (
          <div key={i} className={`shrink-0 border-r border-[#c9c9c9] px-[6px] pt-[13px] ${c.w}`}>
            <Select value={i === 0 ? month : c.value} track={c.vt} disabled={c.disabled} h="h-[43px]" />
          </div>
        ))}
        <div className="w-[11px] overflow-hidden pt-[13px] pl-[7px]">
          <div className="h-[43px] w-5 rounded-[4px] border border-[#b4b5b7] bg-[#d4d4d4]" />
        </div>
      </div>
      <div className="flex h-[38px] shrink-0 items-center border-b-2 border-[#b3b3b3] bg-[#d4d4d4] pl-[20px] text-[14px] whitespace-pre">
        <span className="font-semibold tracking-[0.7px] text-[#161616]">Cost code - </span>
        <span className="font-medium tracking-[0.82px] text-[#33468f]">USA/OPR/PS/-/IN/SIR</span>
      </div>
    </>
  );
}

function ItemsTable() {
  return (
    <section className="mt-[20px] ml-[19px] flex h-[400px] w-[1810px] shrink-0 flex-col overflow-hidden bg-[#dadada] shadow-[0_0_8px_rgba(0,0,0,0.2)]">
      <div className="flex h-[43px] shrink-0 items-center border-b border-[#c9c9c9] text-[14px] font-semibold text-[#7b489c]">
        {columns.map((c, i) => (
          <div key={i} className={`flex shrink-0 items-center pl-[12px] ${c.w}`}>
            <span className={`whitespace-nowrap ${c.ht}`}>
              {c.req && <Star />}
              {c.head}
            </span>
            {c.info && (
              <svg viewBox="0 0 16 16" className="mr-[12px] mb-[3px] ml-auto size-4" fill="none" stroke="#2a7ad0" strokeWidth="1.200">
                <circle cx="8" cy="8" r="7.200" />
                <path d="M6.500 7H8.200V12M6.300 12H10M8 3.800V5.300" />
              </svg>
            )}
          </div>
        ))}
      </div>
      <LineItem month="Aug-23" />
      <LineItem month="Sep-23" />
      <div className="flex h-[70px] shrink-0">
        {columns.map((c, i) => (
          <div key={i} className={`shrink-0 border-r border-[#c9c9c9] ${c.w}`} />
        ))}
      </div>
    </section>
  );
}

function Dialog() {
  return (
    <div role="dialog" className="absolute top-[386px] left-[456px] h-[130px] w-[937px] rounded-[5px] bg-white shadow-[0_4px_12px_rgba(0,0,0,0.25)]">
      <p className="pt-[19px] text-center text-[13px] leading-5 tracking-[1.42px] whitespace-nowrap text-[#1c1c1c]">
        Please wait for few minutes until the Invoice has been generated form netsuite.
      </p>
      <div className="mt-[31px] flex justify-end pr-[21px]">
        <button className="h-[41px] w-[97px] rounded-[4px] bg-linear-to-b from-[#b48fce] to-[#8244ab] pt-[1px] text-[15px] font-semibold tracking-[0.8px] text-white shadow-[0_4px_8px_rgba(0,0,0,0.25)]">Ok</button>
      </div>
    </div>
  );
}

export default function App() {
  return (
    <div className="flex h-[1080px] w-[1920px] flex-col overflow-hidden bg-[#1d1d1d]">
      <TopBar />
      <div className="flex h-[1046px]">
        <Dock />
        <main className="flex min-w-0 flex-1 flex-col overflow-hidden">
          <div className={UI}>
            <TabStrip />
            <Toolbar />
            <Bookmarks />
          </div>
          <div className="relative flex flex-1 flex-col overflow-hidden bg-[#dadada] font-['Inter',sans-serif]">
            <SiteHeader />
            <div className="flex h-[98px] shrink-0 items-start justify-between pr-[143px] pl-[44px]">
              <h2 className="mt-[49px] text-[15px] leading-5 font-semibold whitespace-pre text-[#252525]">
                <span className="tracking-[0.87px]">PO requests - </span>
                <span className="tracking-[0.36px] text-[#33468f]">2324PO0019 (AS2324-ASI-834)</span>
              </h2>
              <button className="mt-[30px] h-[36px] w-[159px] rounded-[5px] bg-[#dcdcdc] text-[15px] font-semibold tracking-[0.3px] text-[#7e4c9f] shadow-[0_3px_8px_rgba(0,0,0,0.25)]">Invoice pdf</button>
            </div>
            <RequestForm />
            <ItemsTable />
            <Dialog />
          </div>
        </main>
      </div>
    </div>
  );
}
